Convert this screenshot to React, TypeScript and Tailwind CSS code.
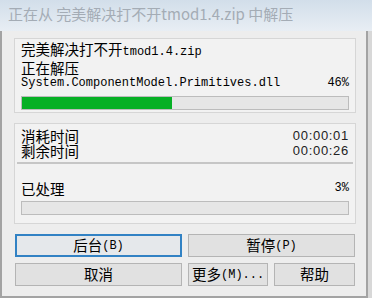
const cjk = "'Noto Sans CJK SC', sans-serif";
const mono = "'Liberation Mono', 'Noto Sans CJK SC', monospace";
const sans = "'Liberation Sans', sans-serif";

// 中文字用大一号，ASCII 用等宽小字，模仿宋体半角效果
const Mixed = ({ text }: { text: string }) => {
  const parts = text.match(/[\u4e00-\u9fff]+|[^\u4e00-\u9fff]+/g) ?? [];
  return (
    <>
      {parts.map((p, i) =>
        /[\u4e00-\u9fff]/.test(p) ? (
          <span key={i} className="text-[14.5px]" style={{ fontFamily: cjk }}>
            {p}
          </span>
        ) : (
          <span key={i} className="text-[12px]" style={{ fontFamily: mono }}>
            {p}
          </span>
        )
      )}
    </>
  );
};

const Bar = ({ percent }: { percent: number }) => (
  <div className="h-[14px] border border-[#bcbcbc] bg-[#e6e6e6]">
    <div className="h-full bg-[#06b025]" style={{ width: `${percent}%` }} />
  </div>
);

const Time = ({ value }: { value: string }) => (
  <span className="text-[13px] tracking-[0.7px] text-[#222]" style={{ fontFamily: sans }}>
    {value}
  </span>
);

const Button = ({
  label,
  focused,
  className,
}: {
  label: string;
  focused?: boolean;
  className?: string;
}) => (
  <button
    className={
      "h-[23px] flex items-center justify-center whitespace-nowrap overflow-hidden leading-none text-black " +
      (focused
        ? "border-2 border-[#3282c4] bg-[#e5e8eb] "
        : "border border-[#b4b4b4] bg-[#e1e1e1] ") +
      (className ?? "")
    }
  >
    <Mixed text={label} />
  </button>
);

export default function App() {
  return (
    <div className="w-[372px] h-[298px] flex flex-col overflow-hidden bg-[#f0f0f0] text-black">
      {/* 标题栏 */}
      <div
        className="h-[31px] shrink-0 flex items-center pl-2 pb-[3px] bg-gradient-to-b from-[#d2deea] to-[#e8eef4] text-[15px] text-[#a4acb5]"
        style={{ fontFamily: cjk }}
      >
        正在从 完美解决打不开tmod1.4.zip 中解压
      </div>

      <div className="flex flex-1">
        <div className="w-[368px] flex flex-col border-l-2 border-r-2 border-b-2 border-[#a3a3a3] bg-[#ededed] pt-[7px] pl-[12px] pr-[10px]">
          {/* 当前文件 */}
          <div className="h-[75px] border border-[#d6d6d6] bg-[#f2f2f2] px-[6px] pt-[2px]">
            <div className="leading-[15px]">
              <Mixed text="完美解决打不开tmod1.4.zip" />
            </div>
            <div className="leading-[15px]">
              <Mixed text="正在解压" />
            </div>
            <div
              className="flex justify-between leading-[15px] text-[12px]"
              style={{ fontFamily: mono }}
            >
              <span>System.ComponentModel.Primitives.dll</span>
              <span>46%</span>
            </div>
            <div className="mt-[5px]">
              <Bar percent={46} />
            </div>
          </div>

          {/* 时间与总进度 */}
          <div className="h-[101px] mt-[10px] border border-[#d6d6d6] bg-[#f2f2f2] px-[6px] pt-[4px]">
            <div className="flex justify-between items-center leading-[15px]">
              <Mixed text="消耗时间" />
              <Time value="00:00:01" />
            </div>
            <div className="flex justify-between items-center leading-[15px]">
              <Mixed text="剩余时间" />
              <Time value="00:00:26" />
            </div>
            <div className="mt-[4px] -mx-[4px] h-[2px] bg-[#c6c6c6]" />
            <div className="mt-[17px] flex justify-between items-center leading-[15px]">
              <Mixed text="已处理" />
              <span className="text-[12px]" style={{ fontFamily: mono }}>
                3%
              </span>
            </div>
            <div className="mt-[5px]">
              <Bar percent={0} />
            </div>
          </div>

          {/* 按钮 */}
          <div className="mt-[10px] px-[1px] flex flex-col gap-[6px]">
            <div className="flex gap-[6px]">
              <Button label="后台(B)" focused className="w-[167px]" />
              <Button label="暂停(P)" className="w-[167px]" />
            </div>
            <div className="flex gap-[6px]">
              <Button label="取消" className="w-[167px]" />
              <Button label="更多(M)..." className="w-[80px] justify-start pl-[3px]" />
              <Button label="帮助" className="w-[81px]" />
            </div>
          </div>
        </div>
        <div className="flex-1 bg-[#d8d8d8]" />
      </div>
    </div>
  );
}
